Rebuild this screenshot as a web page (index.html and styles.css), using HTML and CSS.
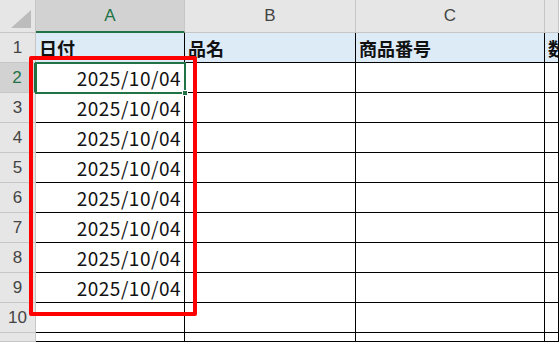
FILE: index.html
```html
<!DOCTYPE html>
<html lang="ja">
<head>
    <meta charset="UTF-8">
    <title>日付の入力</title>
    <link rel="stylesheet" href="styles.css">
</head>
<body>
    <div class="sheet">
        <div class="corner"><svg width="24" height="22" viewBox="0 0 24 22"><polygon points="22,2 22,20 2,20" fill="#bcbcbc"/></svg></div>
        <div class="colhead selected">A</div>
        <div class="colhead">B</div>
        <div class="colhead">C</div>
        <div class="colhead"></div>

        <div class="rowhead">1</div>
        <div class="cell title">日付</div>
        <div class="cell title">品名</div>
        <div class="cell title">商品番号</div>
        <div class="cell title">数</div>

        <div class="rowhead selected">2</div>
        <div class="cell date active">2025/10/04<span class="handle"></span></div>
        <div class="cell"></div><div class="cell"></div><div class="cell"></div>

        <div class="rowhead">3</div>
        <div class="cell date">2025/10/04</div>
        <div class="cell"></div><div class="cell"></div><div class="cell"></div>

        <div class="rowhead">4</div>
        <div class="cell date">2025/10/04</div>
        <div class="cell"></div><div class="cell"></div><div class="cell"></div>

        <div class="rowhead">5</div>
        <div class="cell date">2025/10/04</div>
        <div class="cell"></div><div class="cell"></div><div class="cell"></div>

        <div class="rowhead">6</div>
        <div class="cell date">2025/10/04</div>
        <div class="cell"></div><div class="cell"></div><div class="cell"></div>

        <div class="rowhead">7</div>
        <div class="cell date">2025/10/04</div>
        <div class="cell"></div><div class="cell"></div><div class="cell"></div>

        <div class="rowhead">8</div>
        <div class="cell date">2025/10/04</div>
        <div class="cell"></div><div class="cell"></div><div class="cell"></div>

        <div class="rowhead">9</div>
        <div class="cell date">2025/10/04</div>
        <div class="cell"></div><div class="cell"></div><div class="cell"></div>

        <div class="rowhead">10</div>
        <div class="cell"></div>
        <div class="cell"></div><div class="cell"></div><div class="cell"></div>

        <div class="rowhead"></div>
        <div class="cell"></div>
        <div class="cell"></div><div class="cell"></div><div class="cell"></div>

        <div class="highlight"></div>
    </div>
</body>
</html>
```

FILE: styles.css
```css
body {
    margin: 0;
    background: #ffffff;
    font-family: "Noto Sans CJK JP", "Noto Sans", sans-serif;
    overflow: hidden;
}
.sheet {
    position: relative;
    display: grid;
    grid-template-columns: 36px 149px 171px 189px 14px;
    grid-template-rows: 33px repeat(10, 30px) 9px;
    overflow: hidden;
}
.corner {
    background: #e6e6e6;
    border-right: 1px solid #c6c6c6;
    border-bottom: 1px solid #c6c6c6;
    box-sizing: border-box;
    display: flex;
    align-items: flex-end;
    justify-content: flex-end;
    padding: 0 2px 2px 0;
}
.colhead {
    background: #e6e6e6;
    color: #444;
    font-family: "Liberation Sans", Arial, sans-serif;
    font-size: 17px;
    display: flex;
    align-items: center;
    justify-content: center;
    border-right: 1px solid #c6c6c6;
    border-bottom: 1px solid #c6c6c6;
    box-sizing: border-box;
}
.colhead.selected {
    background: #d2d2d2;
    color: #217346;
    border-bottom: 2px solid #217346;
}
.rowhead {
    background: #e6e6e6;
    color: #444;
    font-family: "Liberation Sans", Arial, sans-serif;
    font-size: 17px;
    display: flex;
    align-items: center;
    justify-content: center;
    border-right: 1px solid #c6c6c6;
    border-bottom: 1px solid #c6c6c6;
    box-sizing: border-box;
}
.rowhead.selected {
    background: #d2d2d2;
    color: #217346;
    border-right: 2px solid #217346;
}
.cell {
    position: relative;
    border-right: 1px solid #000;
    border-bottom: 1px solid #000;
    box-sizing: border-box;
    display: flex;
    align-items: center;
    color: #111;
    white-space: nowrap;
}
.cell.title {
    background: #ddebf7;
    font-weight: bold;
    font-size: 18px;
    padding-left: 3px;
    overflow: hidden;
}
.cell.date {
    justify-content: flex-end;
    padding-right: 3px;
    font-size: 19px;
    letter-spacing: 0.5px;
}
.cell.active {
    outline: 2px solid #217346;
    outline-offset: -1px;
    z-index: 1;
}
.handle {
    position: absolute;
    right: -4px;
    bottom: -4px;
    width: 6px;
    height: 6px;
    background: #217346;
    border: 1px solid #fff;
    box-sizing: border-box;
}
.highlight {
    position: absolute;
    left: 29px;
    top: 56px;
    width: 168px;
    height: 260px;
    border: 4px solid #ff0000;
    border-radius: 2px;
    box-sizing: border-box;
    z-index: 2;
}
```
